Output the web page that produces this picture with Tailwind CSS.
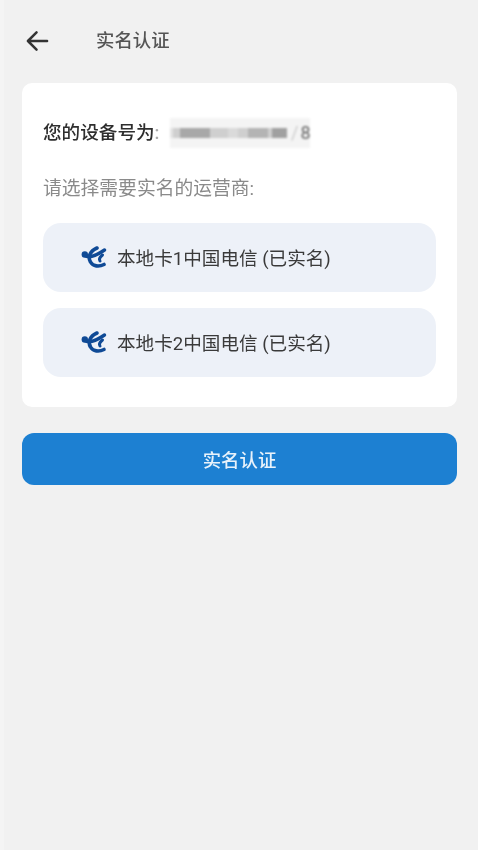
<!DOCTYPE html>
<html lang="zh-CN">
<head>
  <meta charset="UTF-8" />
  <meta name="viewport" content="width=device-width, initial-scale=1.0" />
  <title>实名认证</title>
  <script src="https://cdn.jsdelivr.net/npm/@tailwindcss/browser@4"></script>
</head>
<body class="bg-[#f1f1f1] h-[850px] overflow-hidden border-l-[4px] border-[#f4f4f4] font-['Roboto','Noto_Sans_CJK_SC',sans-serif]">
  <div class="blur-[0.4px] -ml-[4px]">

    <!-- header -->
    <div class="flex items-center h-[81px] pl-[26px]">
      <svg viewBox="0 0 24 22" class="w-[23px] h-[22px] text-[#333]" fill="none" stroke="currentColor" stroke-width="2.6" stroke-linecap="round" stroke-linejoin="round">
        <path d="M22 11H2M11 2 2 11l9 9"/>
      </svg>
      <span class="ml-[47px] mt-[1px] text-[18.4px] font-medium text-[#555] leading-none">实名认证</span>
    </div>

    <!-- card -->
    <div class="ml-[22px] mr-[21px] mt-[2px] h-[324px] bg-white rounded-[10px] pl-[21px] pr-[21px] pt-[36px]">
      <div class="flex items-center h-[28px] text-[18.6px] text-[#2e2e2e] leading-none">
        <span class="w-[127px] mt-[1px] whitespace-nowrap font-medium">您的设备号为<span class="text-[#aaa]">:</span></span>
        <div class="relative w-[140px] h-[30px] bg-[#f4f4f4] blur-[1px] flex items-center">
          <div class="flex items-center w-[117px] h-[10px] bg-[#cfcfcf]">
            <div class="w-[3px] h-full bg-[#e4e4e4]"></div>
            <div class="ml-[7px] w-[30px] h-full bg-[#a8a8a8]"></div>
            <div class="ml-[18px] w-[10px] h-full bg-[#dadada]"></div>
            <div class="ml-[10px] w-[20px] h-full bg-[#b4b4b4]"></div>
            <div class="ml-[4px] w-[15px] h-full bg-[#a0a0a0]"></div>
          </div>
          <span class="ml-[4px] text-[18px] text-[#ccc] leading-none">/</span>
          <span class="ml-[2px] text-[18px] text-[#666] leading-none">8</span>
        </div>
      </div>

      <p class="mt-[29px] text-[18.8px] text-[#8a8a8a] leading-[26px]">请选择需要实名的运营商:</p>

      <div class="mt-[21px] flex flex-col gap-[16px]">
        <div class="flex items-center h-[69px] bg-[#edf1f8] rounded-[18px] pl-[35px]">
          <svg viewBox="0 0 32 30" class="w-[32px] h-[30px]" fill="none" stroke="#0f4a96" stroke-linecap="round">
            <circle cx="6.800" cy="11.500" r="3.200" fill="#0f4a96" stroke="none"/>
            <path d="M6.800 12C10 15.500 17 13.500 26.500 7" stroke-width="3.400"/>
            <path d="M19 5C12 8 9.500 14 12.500 19C15 23.500 21 24 26 21.500" stroke-width="3.600"/>
            <path d="M24.500 12C22 14 21 16.500 22 18" stroke-width="3"/>
          </svg>
          <span class="ml-[7px] mt-[3px] text-[18.6px] text-[#3a3a3a] leading-none">本地卡1中国电信 (已实名)</span>
        </div>
        <div class="flex items-center h-[69px] bg-[#edf1f8] rounded-[18px] pl-[35px]">
          <svg viewBox="0 0 32 30" class="w-[32px] h-[30px]" fill="none" stroke="#0f4a96" stroke-linecap="round">
            <circle cx="6.800" cy="11.500" r="3.200" fill="#0f4a96" stroke="none"/>
            <path d="M6.800 12C10 15.500 17 13.500 26.500 7" stroke-width="3.400"/>
            <path d="M19 5C12 8 9.500 14 12.500 19C15 23.500 21 24 26 21.500" stroke-width="3.600"/>
            <path d="M24.500 12C22 14 21 16.500 22 18" stroke-width="3"/>
          </svg>
          <span class="ml-[7px] mt-[3px] text-[18.6px] text-[#3a3a3a] leading-none">本地卡2中国电信 (已实名)</span>
        </div>
      </div>
    </div>

    <!-- submit -->
    <button class="block ml-[22px] mt-[26px] w-[435px] h-[52px] pt-[3px] bg-[#1d80d2] rounded-[12px] text-white/90 text-[18.4px] font-medium">实名认证</button>

  </div>
</body>
</html>
